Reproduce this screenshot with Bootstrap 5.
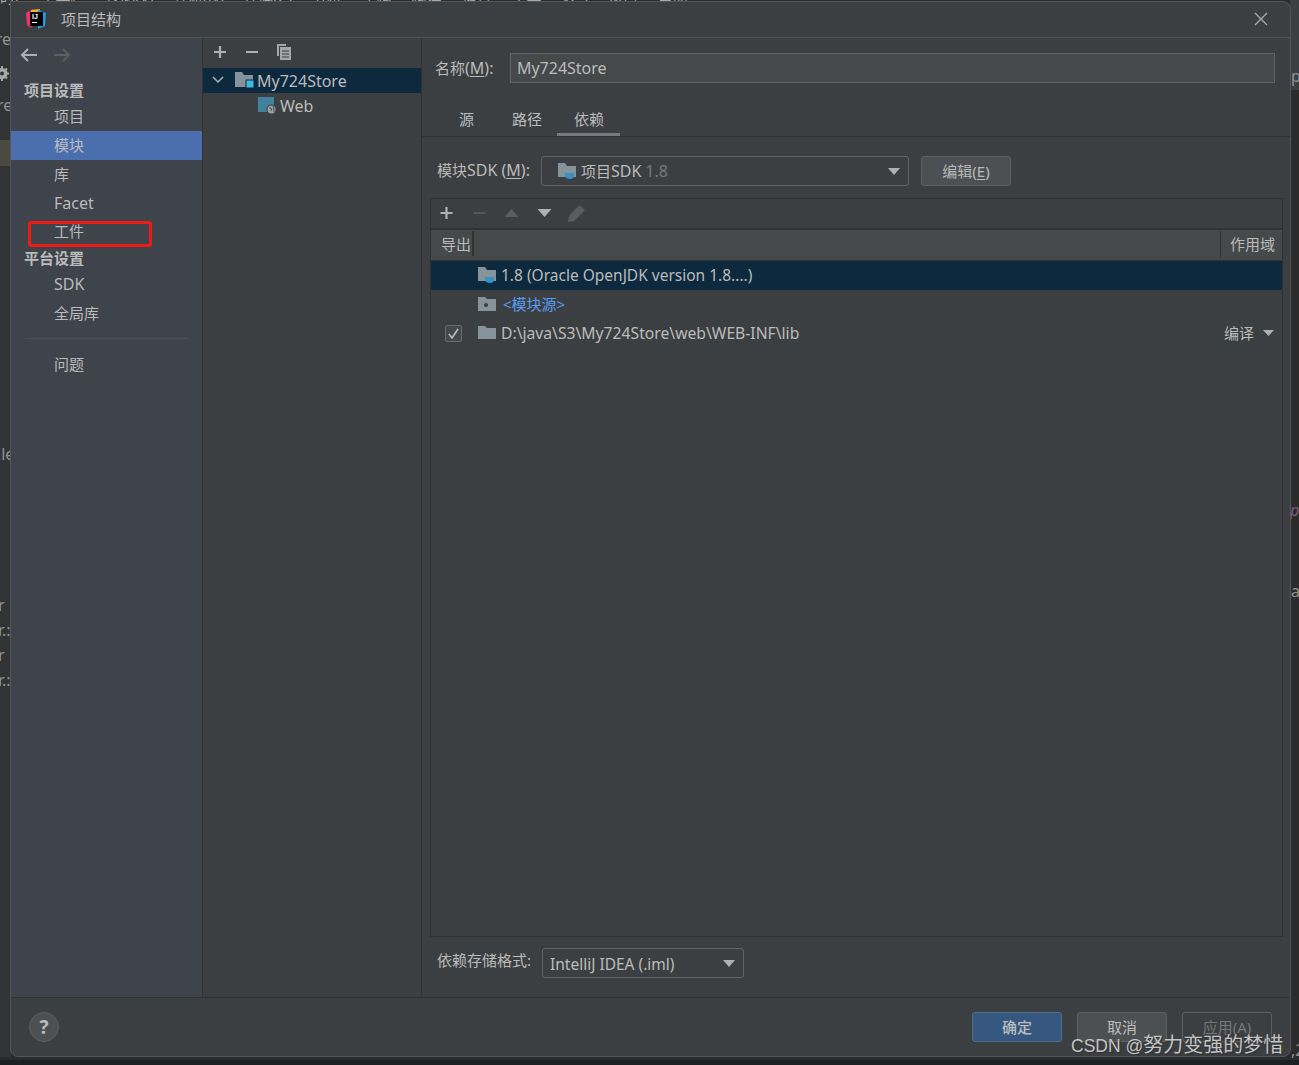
<!DOCTYPE html>
<html lang="zh-CN">
<head>
<meta charset="utf-8">
<title>项目结构</title>
<link href="https://cdn.jsdelivr.net/npm/bootstrap@5.3.0/dist/css/bootstrap.min.css" rel="stylesheet">
<style>
html,body{margin:0;height:100%;overflow:hidden}
body{background:#2b2b2b;color:#bbb;font-family:"Noto Sans","Noto Sans CJK SC",sans-serif;font-size:15px;line-height:20px}
.lat{font-size:16px}
.lat-m{font-size:15.5px}
.lat-p{font-size:15.7px}
.ide{position:relative;width:1299px;height:1065px;overflow:hidden;background:#2b2b2b}
.ide-left{position:absolute;left:0;top:0;width:11px;height:1057px;background:#313335}
.ide-hl{position:absolute;left:0;top:140px;width:11px;height:26px;background:#4a4a40}
.ide-top{position:absolute;left:0;top:-13px;white-space:nowrap;color:#a9a9a9;font-size:15px;word-spacing:16px}
.ide-right{position:absolute;left:1290px;top:0;width:9px;height:90px;background:#3c3f41}
.ide-bot{position:absolute;left:0;top:1060px;width:1299px;height:5px;background:#1e1f20}
.frag{position:absolute;color:#8f9396;white-space:nowrap;font-size:16px}
.dlg{position:absolute;left:10px;top:1px;width:1281px;height:1056px;background:#3c3f41;border:1px solid #555;border-radius:0 8px 8px 8px;overflow:hidden}
.ttl{height:36px;border-bottom:1px solid #515151;padding-left:15px;gap:15px}
.ttl-x{margin-left:auto;margin-right:22px}
.main-area{height:959px}
.side{width:192px;background:#3e434c;border-right:1px solid #323232}
.side-bar{height:35px;padding:0 0 0 8px;gap:13px}
.side-head{height:25px;padding-left:13px;font-weight:700;color:#bbb;line-height:27px}
.side-item{height:29px;line-height:29px;padding-left:43px;color:#bbb}
.side-on{background:#4b6eaf}
.side-rule{border-top:1px solid #4a4f58;margin:10px 14px 11px 14px}
.tree{width:219px;border-right:1px solid #323232}
.tree-bar{height:30px;padding:0 0 2px 9px;gap:16px}
.tree-row{height:25px}
.tree-txt{padding-top:2px}
.tree-on{background:#0d293e}
.pane{flex:1;min-width:0}
.name-row{height:62px;padding:15px 15px 0 13px}
.lbl-m{width:75px;white-space:nowrap}
.name-box{width:766px;height:30px;background:#45494a;border:1px solid #646464;padding:0 6px;line-height:28px}
.tab-row{height:37px;border-bottom:1px solid #323232;padding-left:22px}
.tab-it{padding:0 15px;height:36px;line-height:38px;position:relative;white-space:nowrap}
.tab-a{width:63px;padding:0 0 0 17px;border-bottom:3px solid #747a80;margin-left:-1px}
.sdk-row{height:61px;padding:19px 0 0 15px}
.pick{height:30px;background:#3c3f41;border:1px solid #646464;border-radius:3px;line-height:28px;position:relative}
.pick-sdk{width:368px;margin-left:10px;padding-left:16px}
.pick-fmt{width:202px;margin-left:10px;padding-left:7px;line-height:30px}
.pick-arw{position:absolute;right:8px;top:11px}
.btn-ij{width:90px;height:30px;padding:0;background:#4c5052;border:1px solid #5e6060;border-radius:3px;color:#bbb;font-size:15px;line-height:28px}
.btn-ij:hover{background:#4c5052;color:#bbb;border-color:#5e6060}
.btn-low{line-height:29px}
.btn-ok{background:#365880;border-color:#4c708c;font-weight:500}
.btn-off{background:#3c3f41;border-color:#5e6060;color:#777}
.dep{margin:0 7px 0 8px;height:739px;border:1px solid #323232}
.dep-bar{height:31px;padding-left:7px;gap:15.5px;border-bottom:2px solid #323232}
.dep-head{height:31px;background:#45494a;border-bottom:1px solid #323232}
.dh-a{width:43px;padding-left:10px;line-height:28px;position:relative}
.dh-a::after{content:"";position:absolute;right:0;top:1px;height:25px;border-right:2px solid #323232}
.dh-b{margin-left:auto;width:62px;padding-left:9px;line-height:27px;border-left:1px solid #323232;margin-top:1px;height:27px}
.dep-row{height:29px;position:relative;line-height:29px}
.dep-on{background:#0d293e}
.chk-c{width:47px;padding-left:14px}
.chk-box{width:17px;height:17px;border:1px solid #6b6b6b;border-radius:2px;background:#43494a}
.dep-ic{width:23px;padding-bottom:3px}
.link-src{color:#589df6;margin-left:2px}
.dim{color:#777}
.fmt-row{height:60px;padding:11px 0 0 15px}
.foot{height:60px;border-top:1px solid #323232;padding:14px 0 0 18px}
.help{width:30px;height:30px;border-radius:50%;background:#4c5052;border:1px solid #5e6060;color:#bbb;font-weight:700;font-size:19px;line-height:28px;text-align:center}
.foot-btns{margin-left:auto;gap:15px;padding-right:18px}
.mark-box{position:absolute;left:28px;top:221px;width:124px;height:26px;border:3px solid #f01a14;border-radius:3px}
.wm{position:absolute;left:1071px;top:1032px;font-size:20px;line-height:26px;color:#c4c4c4;text-shadow:1px 1px 1px #2e3032;white-space:nowrap;font-family:"Liberation Sans","Noto Sans CJK SC",sans-serif}
.wm-lat{font-size:17.5px}
u{text-underline-offset:2px}
</style>
</head>
<body>
<div class="ide">
  <div class="ide-left"></div>
  <div class="ide-hl"></div>
  <div class="ide-right"></div>
  <div class="ide-bot"></div>
  <div class="ide-top">时/ 工具栏 视图(V) 导航(N) 代码(C) 分析 重构 构建 运行 工具 VCS 窗口 帮助</div>
  <span class="frag" style="left:-14px;top:29px">ore</span>
  <svg class="frag" style="left:-3px;top:65px" width="13" height="17" viewBox="0 0 13 17"><circle cx="5" cy="8.5" r="4" fill="none" stroke="#a9a9a9" stroke-width="3"/><path d="M5 1v15M-2 8.5h14M0 3.5l10 10M10 3.5l-10 10" stroke="#a9a9a9" stroke-width="2"/><circle cx="5" cy="8.5" r="2" fill="#313335"/></svg>
  <span class="frag" style="left:-3px;top:95px">re</span>
  <span class="frag" style="left:-3px;top:444px">lle</span>
  <span class="frag" style="left:-2px;top:595px">r</span>
  <span class="frag" style="left:-2px;top:620px">r.:</span>
  <span class="frag" style="left:-2px;top:645px">r</span>
  <span class="frag" style="left:-2px;top:670px">r.:</span>
  <span class="frag" style="left:1291px;top:66px">p</span>
  <span class="frag" style="left:1290px;top:500px;color:#7a5c8a;font-style:italic">p</span>
  <span class="frag" style="left:1291px;top:581px">a</span>
  <span class="frag" style="left:1291px;top:1040px">,2</span>

  <div class="dlg d-flex flex-column">
    <div class="ttl d-flex align-items-center">
      <svg width="20" height="20" viewBox="0 0 20 20"><path d="M0 4 7 0 9 4 5 19 1 16Z" fill="#f4306e"/><path d="M5 1 14 0 13 5 5 5Z" fill="#fcb22d"/><path d="M12 1 20 4 19 17 12 20Z" fill="#1a9fe0"/><rect x="4" y="3" width="13" height="14" fill="#000"/><rect x="6" y="13" width="5" height="1" fill="#fff"/><text x="6" y="10" font-size="7" font-weight="700" fill="#fff" font-family="Liberation Sans">IJ</text></svg>
      <span>项目结构</span>
      <svg class="ttl-x" width="14" height="14" viewBox="0 0 14 14"><path d="M1 1 13 13M13 1 1 13" stroke="#aaa" stroke-width="1.3"/></svg>
    </div>
    <div class="main-area d-flex">
      <nav class="side flex-shrink-0">
        <div class="side-bar d-flex align-items-center">
          <svg width="20" height="16" viewBox="0 0 20 16"><path d="M18 8H3M9 2 3 8l6 6" fill="none" stroke="#aeb0b2" stroke-width="2"/></svg>
          <svg width="20" height="16" viewBox="0 0 20 16"><path d="M2 8h15M11 2l6 6-6 6" fill="none" stroke="#5c5f61" stroke-width="2"/></svg>
        </div>
        <div class="side-head" style="margin-top:4px">项目设置</div>
        <div class="side-item">项目</div>
        <div class="side-item side-on">模块</div>
        <div class="side-item">库</div>
        <div class="side-item lat">Facet</div>
        <div class="side-item" style="line-height:27px">工件</div>
        <div class="side-head" style="margin-top:-2px">平台设置</div>
        <div class="side-item lat">SDK</div>
        <div class="side-item">全局库</div>
        <div class="side-rule"></div>
        <div class="side-item">问题</div>
      </nav>
      <div class="tree flex-shrink-0">
        <div class="tree-bar d-flex align-items-center">
          <svg width="16" height="16" viewBox="0 0 16 16"><path d="M8 2v12M2 8h12" stroke="#aeb0b2" stroke-width="2.2"/></svg>
          <svg width="16" height="16" viewBox="0 0 16 16"><path d="M2 8h12" stroke="#aeb0b2" stroke-width="2.2"/></svg>
          <svg width="16" height="16" viewBox="0 0 16 16"><path d="M1 0h9v2H3v10H1Z" fill="#a4a6a8"/><rect x="4" y="3" width="11" height="13" fill="#a4a6a8"/><path d="M6 7h7M6 10h7M6 13h7" stroke="#3c3f41"/></svg>
        </div>
        <div class="tree-row tree-on d-flex align-items-center">
          <svg style="margin-left:9px" width="12" height="8" viewBox="0 0 12 8"><path d="M1 1l5 5 5-5" fill="none" stroke="#aeb0b2" stroke-width="1.5"/></svg>
          <svg style="margin-left:11px" width="20" height="18" viewBox="0 0 20 18"><path d="M0 1h7l2 3h9v12H0Z" fill="#87939a"/><rect x="11" y="9" width="8" height="8" fill="#40b6e0" stroke="#0d293e"/></svg>
          <span class="lat tree-txt" style="margin-left:2px">My724Store</span>
        </div>
        <div class="tree-row d-flex align-items-center" style="padding-left:55px">
          <svg width="19" height="18" viewBox="0 0 19 18" style="margin-top:2px"><rect y="0" width="16" height="15" fill="#40829e"/><circle cx="13.5" cy="12.5" r="5" fill="#3c3f41"/><circle cx="13.5" cy="12.5" r="4" fill="#9da0a2"/><path d="M11 11c2-1 3 1 2 3M15 9c1 2 1 4 1 6" stroke="#3c3f41" fill="none"/></svg>
          <span class="lat tree-txt" style="margin-left:3px">Web</span>
        </div>
      </div>
      <div class="pane d-flex flex-column">
        <div class="name-row d-flex">
          <div class="lbl-m" style="line-height:30px">名称<span class="lat">(<u>M</u>):</span></div>
          <div class="name-box lat">My724Store</div>
        </div>
        <div class="tab-row d-flex">
          <div class="tab-it" style="padding-right:22px">源</div>
          <div class="tab-it" style="padding:0 16px">路径</div>
          <div class="tab-it tab-a">依赖</div>
        </div>
        <div class="sdk-row d-flex">
          <div style="line-height:29px;width:94px;white-space:nowrap">模块<span class="lat">SDK (<u>M</u>):</span></div>
          <div class="pick pick-sdk d-flex align-items-center">
            <svg width="19" height="18" viewBox="0 0 19 18"><path d="M0 1h7l2 3h9v11H0Z" fill="#87939a"/><path d="M7 11h9v3c0 2-2 3-4 3s-5-1-5-3Z" fill="#3592c4"/></svg>
            <span style="margin-left:4px">项目<span class="lat">SDK</span> <span class="dim lat">1.8</span></span>
            <svg class="pick-arw" width="12" height="7" viewBox="0 0 12 7"><path d="M0 0h12L6 7Z" fill="#aeb0b2"/></svg>
          </div>
          <button type="button" class="btn btn-ij" style="margin-left:12px">编辑(<u>E</u>)</button>
        </div>
        <div class="dep d-flex flex-column">
          <div class="dep-bar d-flex align-items-center">
            <svg width="17" height="16" viewBox="0 0 16 16"><path d="M8 2v12M2 8h12" stroke="#aeb0b2" stroke-width="2.2"/></svg>
            <svg width="17" height="16" viewBox="0 0 16 16"><path d="M2 8h12" stroke="#55585a" stroke-width="2.2"/></svg>
            <svg width="17" height="10" viewBox="0 0 16 10"><path d="M1 9h14L8 1Z" fill="#5a5d5f"/></svg>
            <svg width="17" height="10" viewBox="0 0 16 10"><path d="M1 1h14L8 9Z" fill="#aeb0b2"/></svg>
            <svg width="18" height="18" viewBox="0 0 17 17"><path d="M0 17l1-6L11 1l5 5L6 16Z" fill="#5a5d5f"/></svg>
          </div>
          <div class="dep-head d-flex">
            <div class="dh-a">导出</div>
            <div class="dh-b">作用域</div>
          </div>
          <div class="dep-row dep-on d-flex align-items-center">
            <div class="chk-c"></div>
            <div class="dep-ic"><svg width="19" height="18" viewBox="0 0 19 18"><path d="M0 1h7l2 3h9v11H0Z" fill="#87939a"/><path d="M7 11h9v3c0 2-2 3-4 3s-5-1-5-3Z" fill="#3592c4"/></svg></div>
            <span class="lat-m">1.8 (Oracle OpenJDK version 1.8....)</span>
          </div>
          <div class="dep-row d-flex align-items-center">
            <div class="chk-c"></div>
            <div class="dep-ic"><svg width="19" height="16" viewBox="0 0 19 16"><path d="M0 1h7l2 2h9v12H0Z" fill="#87939a"/><circle cx="8" cy="9" r="2" fill="#3c3f41"/></svg></div>
            <span class="link-src">&lt;模块源&gt;</span>
          </div>
          <div class="dep-row d-flex align-items-center">
            <div class="chk-c"><div class="chk-box d-flex align-items-center justify-content-center"><svg width="11" height="11" viewBox="0 0 11 11"><path d="M1 6l3 4 6-9" fill="none" stroke="#bbb" stroke-width="1.6"/></svg></div></div>
            <div class="dep-ic"><svg width="19" height="16" viewBox="0 0 19 16"><path d="M0 1h7l2 2h9v11H0Z" fill="#87939a"/></svg></div>
            <span class="lat-p">D:\java\S3\My724Store\web\WEB-INF\lib</span>
            <span class="ms-auto" style="margin-right:-1px">编译</span>
            <svg style="margin:0 8px 0 10px" width="11" height="6" viewBox="0 0 11 6"><path d="M0 0h11L5.5 6Z" fill="#aeb0b2"/></svg>
          </div>
        </div>
        <div class="fmt-row d-flex">
          <div style="width:95px;line-height:24px;white-space:nowrap">依赖存储格式:</div>
          <div class="pick pick-fmt lat-m">IntelliJ IDEA (.iml)
            <svg class="pick-arw" width="12" height="7" viewBox="0 0 12 7"><path d="M0 0h12L6 7Z" fill="#aeb0b2"/></svg>
          </div>
        </div>
      </div>
    </div>
    <div class="foot d-flex">
      <div class="help">?</div>
      <div class="foot-btns d-flex">
        <button type="button" class="btn btn-ij btn-ok btn-low">确定</button>
        <button type="button" class="btn btn-ij btn-low">取消</button>
        <button type="button" class="btn btn-ij btn-off btn-low">应用(A)</button>
      </div>
    </div>
  </div>
  <div class="mark-box"></div>
  <div class="wm"><span class="wm-lat">CSDN @</span>努力变强的梦惜</div>
</div>
</body>
</html>
